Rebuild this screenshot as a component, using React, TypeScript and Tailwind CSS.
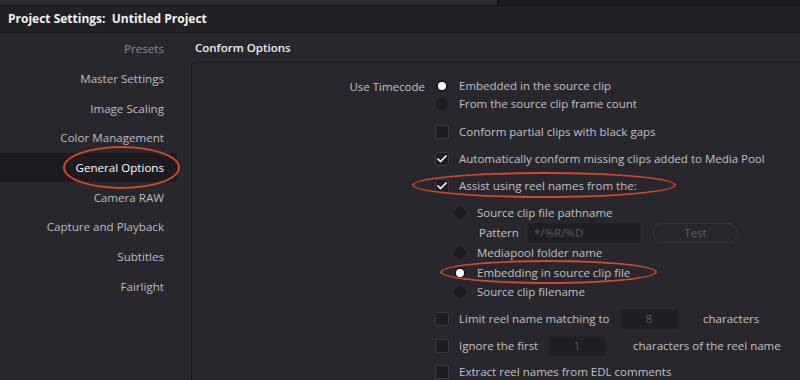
import React from 'react';
import { Check } from 'lucide-react';

const navItems = [
  'Presets',
  'Master Settings',
  'Image Scaling',
  'Color Management',
  'General Options',
  'Camera RAW',
  'Capture and Playback',
  'Subtitles',
  'Fairlight',
];

const Radio: React.FC<{ on?: boolean }> = ({ on }) => (
  <span className="flex h-[14px] w-[14px] flex-shrink-0 items-center justify-center rounded-full border border-[#2c2b30] bg-[#1c1b1f]">
    {on && <span className="h-[8px] w-[8px] rounded-full bg-white" />}
  </span>
);

const Box: React.FC<{ on?: boolean }> = ({ on }) => (
  <span className="flex h-[14px] w-[14px] flex-shrink-0 items-center justify-center rounded-[2px] border border-[#3a393e] bg-[#1d1c20]">
    {on && <Check size={12} strokeWidth={3.5} className="text-white" />}
  </span>
);

const Field: React.FC<{ value: string; className: string; center?: boolean }> = ({ value, className, center }) => (
  <span
    className={
      'flex h-[20px] items-center rounded-[2px] border border-[#232226] bg-[#1f1e22] px-[6px] text-[#5c5b60] ' +
      (center ? 'justify-center ' : '') +
      className
    }
  >
    {value}
  </span>
);

export default function App() {
  return (
    <div
      className="relative h-[380px] w-[800px] overflow-hidden bg-[#28272d] text-[11.5px] text-[#c2c1c6]"
      style={{ fontFamily: '"Open Sans", "Noto Sans", sans-serif' }}
    >
      {/* top strip */}
      <div className="flex h-[5px]">
        <div className="w-[497px] bg-[#2b2a30]" />
        <div className="flex-1 border-l border-[#111] bg-[#1b1b1c]" />
      </div>
      {/* title bar */}
      <div className="flex h-[28px] items-center border-y border-[#141416] bg-[#222126] px-[8px]">
        <span className="text-[12px] font-bold text-[#f2f2f2]">
          Project Settings:&nbsp; Untitled Project
        </span>
      </div>

      <div className="flex">
        {/* sidebar */}
        <div className="w-[191px] flex-shrink-0 pt-[1px]">
          {navItems.map((item, i) => (
            <div
              key={item}
              className={
                'flex h-[29.7px] w-[177px] items-center justify-end pr-[13px] text-[11.6px] ' +
                (i === 0
                  ? 'text-[#8d8c91]'
                  : item === 'General Options'
                  ? 'bg-[#1c1b1f] text-white'
                  : 'text-[#bdbcc1]')
              }
            >
              {item}
            </div>
          ))}
        </div>

        {/* content */}
        <div className="flex flex-1 flex-col">
          <div className="flex h-[29px] items-center pl-[4px] text-[11.5px] font-semibold text-[#f0f0f0]">
            Conform Options
          </div>
          <div className="h-[330px] rounded-tl-[4px] border-l border-t border-[#19181c] bg-[#28272d] pt-[14px]">
            <div className="flex">
              <div className="w-[233px] pt-[1px] text-right">Use Timecode</div>
              <div className="ml-[10px] flex flex-col">
                <div className="flex h-[18px] items-center gap-[10px]">
                  <Radio on />
                  <span>Embedded in the source clip</span>
                </div>
                <div className="flex h-[18px] items-center gap-[10px]">
                  <Radio />
                  <span>From the source clip frame count</span>
                </div>

                <div className="mt-[10px] flex h-[18px] items-center gap-[10px]">
                  <Box />
                  <span>Conform partial clips with black gaps</span>
                </div>
                <div className="mt-[9px] flex h-[18px] items-center gap-[10px]">
                  <Box on />
                  <span>Automatically conform missing clips added to Media Pool</span>
                </div>
                <div className="mt-[9px] flex h-[18px] items-center gap-[10px]">
                  <Box on />
                  <span>Assist using reel names from the:</span>
                </div>

                <div className="ml-[18px] flex flex-col">
                  <div className="mt-[9px] flex h-[18px] items-center gap-[10px]">
                    <Radio />
                    <span>Source clip file pathname</span>
                  </div>
                  <div className="mt-[1px] flex h-[20px] items-center pl-[26px]">
                    <span className="w-[48px]">Pattern</span>
                    <Field value="*/%R/%D" className="w-[114px]" />
                    <span className="ml-[12px] flex h-[20px] w-[85px] items-center justify-center rounded-full border border-[#38373c] text-[#5f5e63]">
                      Test
                    </span>
                  </div>
                  <div className="mt-[1px] flex h-[18px] items-center gap-[10px]">
                    <Radio />
                    <span>Mediapool folder name</span>
                  </div>
                  <div className="mt-[2px] flex h-[18px] items-center gap-[10px]">
                    <Radio on />
                    <span>Embedding in source clip file</span>
                  </div>
                  <div className="mt-[1px] flex h-[18px] items-center gap-[10px]">
                    <Radio />
                    <span>Source clip filename</span>
                  </div>
                </div>

                <div className="mt-[8px] flex h-[20px] items-center">
                  <Box />
                  <span className="ml-[10px] w-[161px]">Limit reel name matching to</span>
                  <Field value="8" center className="w-[58px]" />
                  <span className="ml-[25px]">characters</span>
                </div>
                <div className="mt-[7px] flex h-[20px] items-center">
                  <Box />
                  <span className="ml-[10px] w-[89px]">Ignore the first</span>
                  <Field value="1" center className="w-[58px]" />
                  <span className="ml-[27px]">characters of the reel name</span>
                </div>
                <div className="mt-[7px] flex h-[18px] items-center gap-[10px]">
                  <Box />
                  <span>Extract reel names from EDL comments</span>
                </div>
              </div>
            </div>
          </div>
        </div>
      </div>

      {/* annotation ellipses */}
      <div className="pointer-events-none absolute left-[63px] top-[146px] h-[43px] w-[117px] rounded-[50%] border-2 border-[#d4472a]" />
      <div className="pointer-events-none absolute left-[412px] top-[172px] h-[26px] w-[264px] rounded-[50%] border-2 border-[#d4472a]" />
      <div className="pointer-events-none absolute left-[440px] top-[260px] h-[24px] w-[217px] rounded-[50%] border-2 border-[#d4472a]" />
    </div>
  );
}
